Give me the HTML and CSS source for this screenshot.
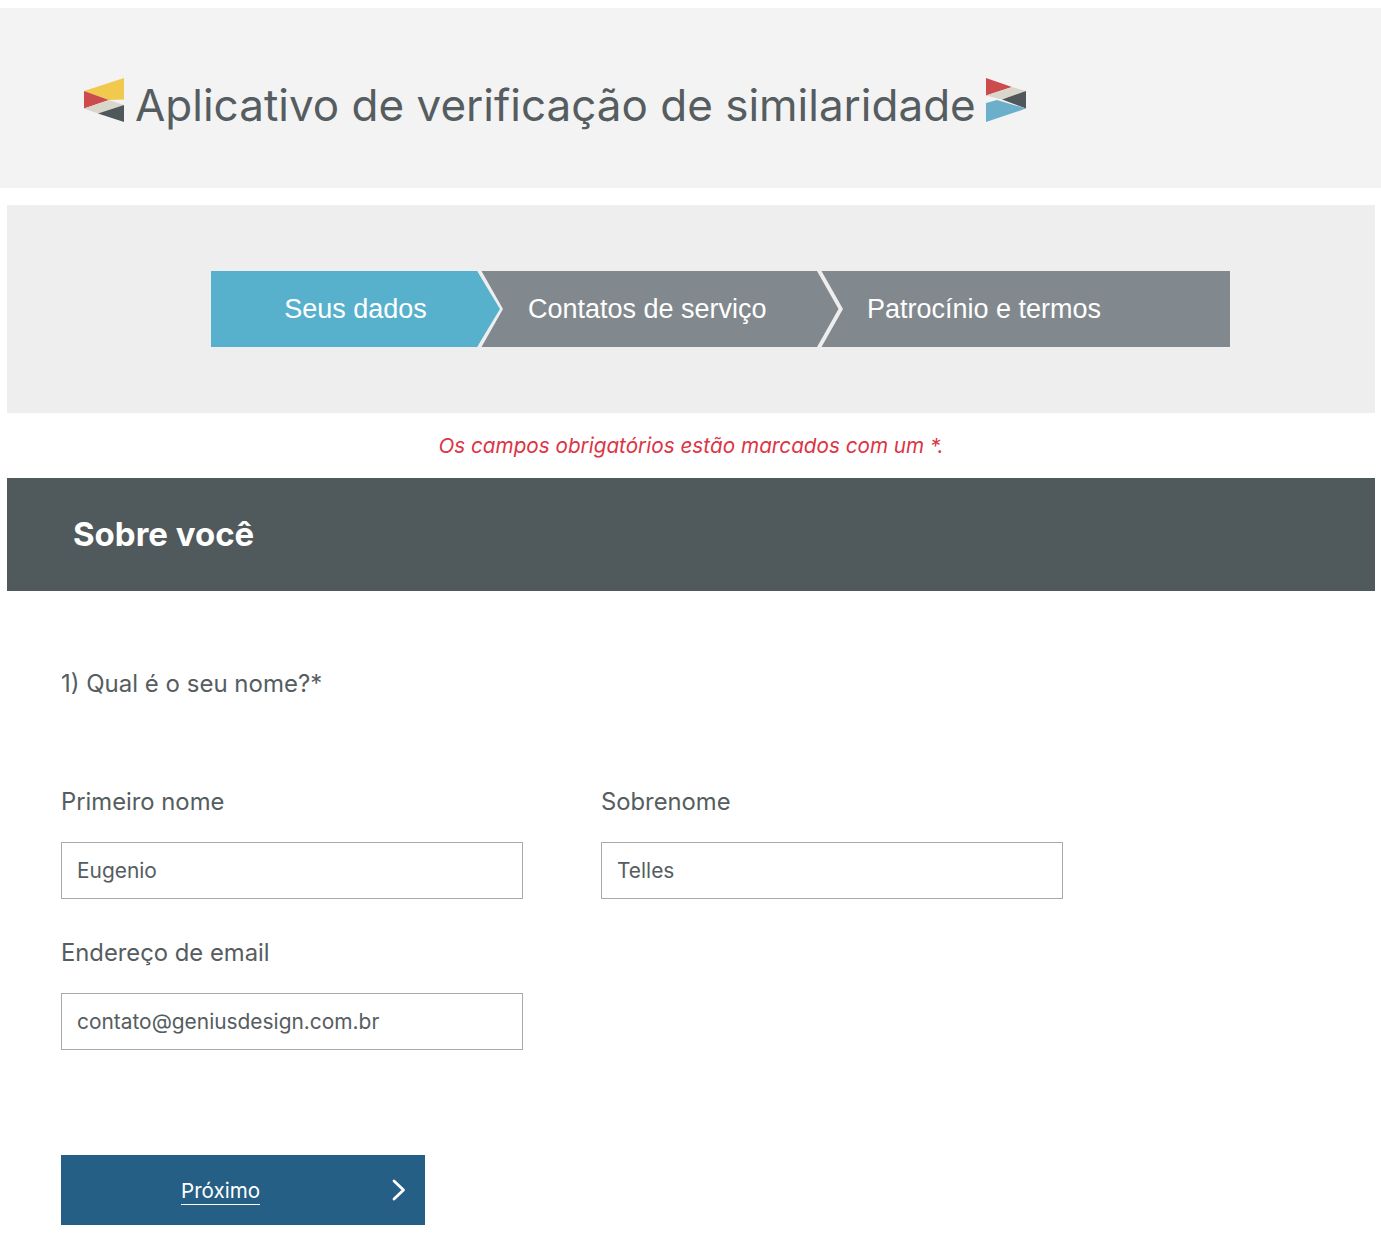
FILE: index.html
```
<!DOCTYPE html>
<html lang="pt-BR">
<head>
<meta charset="utf-8">
<title>Aplicativo de verificação de similaridade</title>
<link rel="stylesheet" href="styles.css">
</head>
<body>
<header class="site-header">
  <svg class="flag" width="41" height="44" viewBox="84 78 41 44" aria-hidden="true">
    <polygon fill="#f0c94d" points="84,91 124,78 124,99.5 109,100"/>
    <polygon fill="#cc4b4c" points="84,91 109,100 84,108.5"/>
    <polygon fill="#d9d6cb" points="84,108.5 109,100 124,105 98,113.5"/>
    <polygon fill="#50575a" points="98,113.5 124,105 124,122"/>
  </svg>
  <h1 class="site-title">Aplicativo de verificação de similaridade</h1>
  <svg class="flag" width="41" height="44" viewBox="986 78 41 44" aria-hidden="true">
    <polygon fill="#cc4b4c" points="986,78 1012,87 986,95.5"/>
    <polygon fill="#d9d6cb" points="986,95.5 1012,87 1026,91 1002,99.5"/>
    <polygon fill="#50575a" points="1026,91 1026,108.5 1002,99.5"/>
    <polygon fill="#6cafca" points="986,103 997,100 1026,108.5 986,122"/>
  </svg>
</header>
<main class="content">
  <nav class="steps-panel">
    <ol class="steps">
      <li class="step step-first">Seus dados</li>
      <li class="step step-mid">Contatos de serviço</li>
      <li class="step step-last">Patrocínio e termos</li>
    </ol>
  </nav>
  <p class="required-note">Os campos obrigatórios estão marcados com um *.</p>
  <h2 class="section-bar">Sobre você</h2>
  <form class="form">
    <p class="question">1) Qual é o seu nome?*</p>
    <div class="fields">
      <label class="field"><span class="field-label">Primeiro nome</span><input class="input" type="text" value="Eugenio"></label>
      <label class="field"><span class="field-label">Sobrenome</span><input class="input" type="text" value="Telles"></label>
      <label class="field"><span class="field-label">Endereço de email</span><input class="input" type="text" value="contato@geniusdesign.com.br"></label>
    </div>
    <button class="next" type="button">
      <span class="next-label">Próximo</span>
      <svg class="next-icon" width="14" height="22" viewBox="0 0 14 22" aria-hidden="true"><path d="M2 2l9.500 9L2 20" fill="none" stroke="#fff" stroke-width="2.800" stroke-linecap="round" stroke-linejoin="round"/></svg>
    </button>
  </form>
</main>
</body>
</html>
```
FILE: styles.css
```
* { box-sizing: border-box; }
html, body { margin: 0; padding: 0; }
body {
  padding-top: 8px;
  background: #fff;
  color: #50575a;
  font-family: Inter, "Liberation Sans", sans-serif;
}
.site-header {
  height: 180px;
  background: #f3f3f3;
  padding: 70px 0 0 84px;
  display: flex;
  align-items: flex-start;
}
.flag { flex: none; display: block; }
.site-title {
  margin: 0 10px 0 10px;
  font-size: 44px;
  line-height: 54px;
  font-weight: 400;
  color: #565d60;
  white-space: nowrap;
}
.content { padding: 17px 6px 0 7px; }
.steps-panel {
  height: 208px;
  background: #eeeeee;
  padding: 66px 145px 0 204px;
}
.steps {
  list-style: none;
  margin: 0;
  padding: 0;
  display: flex;
  height: 76px;
  background: #82898e;
}
.step {
  position: relative;
  font-family: "Liberation Sans", Arial, sans-serif;
  font-size: 27px;
  line-height: 76px;
  color: #fff;
  white-space: nowrap;
}
.step-first, .step-mid { flex: none; }
.step-first::before, .step-mid::before {
  content: "";
  position: absolute;
  top: 0;
  left: 100%;
  width: 27px;
  height: 76px;
  background: #eeeeee;
  clip-path: polygon(0 0, 4.500px 0, 26px 38px, 4.500px 76px, 0 76px, 21.500px 38px);
  z-index: 1;
}
.step-first {
  width: 266px;
  background: #57b1cd;
  padding-left: 23px;
  text-align: center;
}
.step-first::after {
  content: "";
  position: absolute;
  top: 0;
  left: 100%;
  width: 23px;
  height: 76px;
  background: #57b1cd;
  clip-path: polygon(0 0, 100% 50%, 0 100%);
  z-index: 2;
}
.step-mid {
  width: 340px;
  padding-left: 51px;
}
.step-last {
  flex: 1;
  padding-left: 50px;
}
.required-note {
  margin: 0;
  height: 65px;
  padding-top: 20px;
  text-align: center;
  font-size: 20.700px;
  line-height: 26px;
  font-style: italic;
  font-weight: 400;
  color: #dc3545;
}
.section-bar {
  margin: 0;
  height: 113px;
  padding-left: 66px;
  background: #50595c;
  color: #fff;
  font-size: 33px;
  font-weight: 700;
  line-height: 113px;
}
.form { padding: 0 0 21px 54px; }
.question {
  margin: 0;
  padding-top: 78px;
  font-size: 24px;
  line-height: 30px;
  font-weight: 400;
  color: #565d60;
}
.fields {
  display: grid;
  grid-template-columns: 462px 462px;
  column-gap: 78px;
  row-gap: 39px;
  margin-top: 88px;
}
.field { display: block; }
.field-label {
  display: block;
  height: 55px;
  font-size: 23.800px;
  line-height: 30px;
  font-weight: 400;
  color: #565d60;
}
.input {
  display: block;
  width: 462px;
  height: 57px;
  padding: 0 15px;
  border: 1px solid #aaa;
  border-radius: 0;
  background: #fff;
  color: #565d60;
  font-family: Inter, "Liberation Sans", sans-serif;
  font-size: 20.900px;
  font-weight: 400;
  outline: none;
}
.next {
  position: relative;
  display: block;
  width: 364px;
  height: 70px;
  margin-top: 105px;
  padding: 1px 0 0 120px;
  border: 0;
  background: #265f85;
  color: #fff;
  font-family: Inter, "Liberation Sans", sans-serif;
  font-size: 20.600px;
  font-weight: 400;
  text-align: left;
}
.next-label { display: inline-block; border-bottom: 1px solid #fff; line-height: 27px; }
.next-icon { position: absolute; left: 331px; top: 24px; }
```
